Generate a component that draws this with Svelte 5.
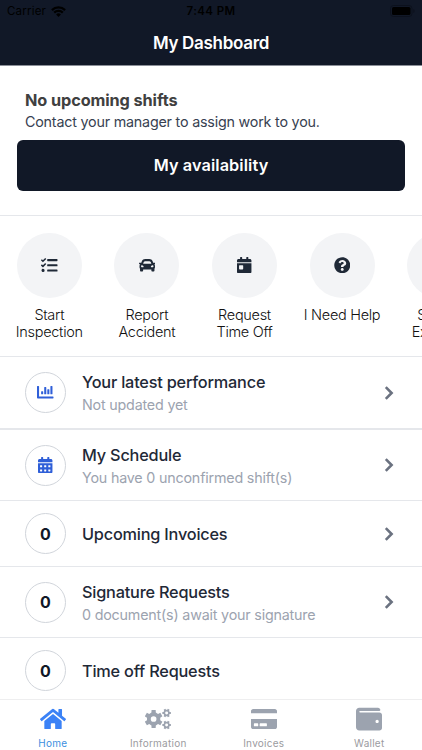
<script>

    // gear outline: alternating tooth tips and roots, with a round hole
    function gear(cx, cy, outer, inner, hole, turn) {
        let d = '';
        const teeth = [[-13, outer], [13, outer], [19, inner], [41, inner]];
        for (let i = 0; i < 6; i++) {
            for (const [a, r] of teeth) {
                const t = (i * 60 + a + turn - 90) * Math.PI / 180;
                d += (d ? 'L' : 'M') + (cx + r * Math.cos(t)).toFixed(1) + ' ' + (cy + r * Math.sin(t)).toFixed(1);
            }
        }
        return d + `zM${cx - hole} ${cy}a${hole} ${hole} 0 1 0 ${hole * 2} 0a${hole} ${hole} 0 1 0 ${-hole * 2} 0z`;
    }

    const calTop = 'M400 64h-48V16c0-8.8-7.2-16-16-16h-32c-8.8 0-16 7.2-16 16v48H160V16c0-8.8-7.2-16-16-16h-32c-8.8 0-16 7.2-16 16v48H48C21.5 64 0 85.5 0 112v48h448v-48c0-26.5-21.5-48-48-48z';
    const calBody = 'M0 464c0 26.5 21.5 48 48 48h352c26.5 0 48-21.5 48-48V192H0v272z';
    const day = 'c0-6.6 5.4-12 12-12h40c6.6 0 12 5.4 12 12v40c0 6.6-5.4 12-12 12h-40c-6.6 0-12-5.4-12-12z';

    const icons = {
        tasks: { w: 512, d: 'M139.61 35.5a12 12 0 0 0-17 0L58.93 98.81l-22.7-22.12a12 12 0 0 0-17 0L3.53 92.41a12 12 0 0 0 0 17l47.59 47.4a12.78 12.78 0 0 0 17.61 0l15.59-15.62L156.52 69a12.09 12.09 0 0 0 .09-17zm0 159.19a12 12 0 0 0-17 0l-63.68 63.72-22.7-22.1a12 12 0 0 0-17 0L3.53 252a12 12 0 0 0 0 17L51 316.5a12.77 12.77 0 0 0 17.6 0l15.7-15.69 72.2-72.22a12 12 0 0 0 .09-16.9zM64 368c-26.49 0-48.59 21.5-48.59 48S37.53 464 64 464a48 48 0 0 0 0-96zm432 16H208a16 16 0 0 0-16 16v32a16 16 0 0 0 16 16h288a16 16 0 0 0 16-16v-32a16 16 0 0 0-16-16zm0-320H208a16 16 0 0 0-16 16v32a16 16 0 0 0 16 16h288a16 16 0 0 0 16-16V80a16 16 0 0 0-16-16zm0 160H208a16 16 0 0 0-16 16v32a16 16 0 0 0 16 16h288a16 16 0 0 0 16-16v-32a16 16 0 0 0-16-16z' },
        car: { w: 512, d: 'M499.99 176h-59.87l-16.64-41.6C406.38 91.63 365.57 64 319.5 64h-127c-46.06 0-86.88 27.63-103.99 70.4L71.87 176H12.01C4.2 176-1.53 183.34.37 190.91l6 24C7.7 220.25 12.5 224 18.01 224h20.07C24.65 235.73 16 252.78 16 272v48c0 16.12 6.16 30.67 16 41.93V416c0 17.67 14.33 32 32 32h32c17.67 0 32-14.33 32-32v-32h256v32c0 17.67 14.33 32 32 32h32c17.67 0 32-14.33 32-32v-54.07c9.84-11.25 16-25.8 16-41.93v-48c0-19.22-8.65-36.27-22.07-48H494c5.51 0 10.31-3.75 11.64-9.09l6-24c1.89-7.57-3.84-14.91-11.65-14.91zm-352.06-17.83c7.29-18.22 24.94-30.17 44.57-30.17h127c19.63 0 37.28 11.95 44.57 30.17L384 208H128l19.93-49.83zM96 319.8c-19.2 0-32-12.76-32-31.9S76.8 256 96 256s48 28.71 48 47.85-28.8 15.95-48 15.95zm320 0c-19.2 0-48 3.19-48-15.95S396.8 256 416 256s32 12.76 32 31.9-12.8 31.9-32 31.9z' },
        calendarDay: { w: 448, d: calBody + 'M64 272c0-8.8 7.2-16 16-16h96c8.8 0 16 7.2 16 16v96c0 8.8-7.2 16-16 16H80c-8.8 0-16-7.2-16-16z' + calTop },
        calendar: { w: 448, d: calBody + [64, 192, 320].map(x => `M${x} 268${day}M${x} 396${day}`).join('') + calTop },
        question: { w: 512, d: 'M504 256c0 136.997-111.043 248-248 248S8 392.997 8 256C8 119.083 119.043 8 256 8s248 111.083 248 248zM262.655 90c-54.497 0-89.255 22.957-116.549 63.758-3.536 5.286-2.353 12.415 2.715 16.258l34.699 26.31c5.205 3.947 12.621 3.008 16.665-2.122 17.864-22.658 30.113-35.797 57.303-35.797 20.429 0 45.698 13.148 45.698 32.958 0 14.976-12.363 22.667-32.534 33.976C247.128 238.528 216 254.941 216 296v4c0 6.627 5.373 12 12 12h56c6.627 0 12-5.373 12-12v-1.333c0-28.462 83.186-29.647 83.186-106.667 0-58.002-60.165-102-116.531-102zM256 338c-25.365 0-46 20.635-46 46 0 25.364 20.635 46 46 46s46-20.636 46-46c0-25.365-20.635-46-46-46z' },
        chart: { w: 512, d: 'M332.8 320h38.4c6.4 0 12.8-6.4 12.8-12.8V172.8c0-6.4-6.4-12.8-12.8-12.8h-38.4c-6.4 0-12.8 6.4-12.8 12.8v134.4c0 6.4 6.4 12.8 12.8 12.8zm96 0h38.4c6.4 0 12.8-6.4 12.8-12.8V76.8c0-6.4-6.4-12.8-12.8-12.8h-38.4c-6.4 0-12.8 6.4-12.8 12.8v230.4c0 6.4 6.4 12.8 12.8 12.8zm-288 0h38.4c6.4 0 12.8-6.4 12.8-12.8v-70.4c0-6.4-6.4-12.8-12.8-12.8h-38.4c-6.4 0-12.8 6.4-12.8 12.8v70.4c0 6.4 6.4 12.8 12.8 12.8zm96 0h38.4c6.4 0 12.8-6.4 12.8-12.8V108.8c0-6.4-6.4-12.8-12.8-12.8h-38.4c-6.4 0-12.8 6.4-12.8 12.8v198.4c0 6.4 6.4 12.8 12.8 12.8zM496 384H64V80c0-8.84-7.16-16-16-16H16C7.16 64 0 71.16 0 80v336c0 17.67 14.33 32 32 32h464c8.84 0 16-7.16 16-16v-32c0-8.84-7.16-16-16-16z' },
        home: { w: 576, d: 'M280.37 148.26L96 300.11V464a16 16 0 0 0 16 16l112.06-.29a16 16 0 0 0 15.92-16V368a16 16 0 0 1 16-16h64a16 16 0 0 1 16 16v95.64a16 16 0 0 0 16 16.05L464 480a16 16 0 0 0 16-16V300L295.67 148.26a12.19 12.19 0 0 0-15.3 0zM571.6 251.47L488 182.56V44.05a12 12 0 0 0-12-12h-56a12 12 0 0 0-12 12v72.61L318.47 43a48 48 0 0 0-61 0L4.34 251.47a12 12 0 0 0-1.6 16.9l25.5 31A12 12 0 0 0 45.15 301l235.22-193.74a12.19 12.19 0 0 1 15.3 0L530.9 301a12 12 0 0 0 16.9-1.6l25.5-31a12 12 0 0 0-1.7-16.93z' },
        cogs: { w: 640, d: gear(212, 256, 226, 166, 70, 0) + gear(532, 108, 108, 80, 36, 30) + gear(532, 404, 108, 80, 36, 30) },
        card: { w: 576, d: 'M0 432c0 26.5 21.5 48 48 48h480c26.5 0 48-21.5 48-48V256H0v176zm192-68c0-6.6 5.4-12 12-12h136c6.6 0 12 5.4 12 12v40c0 6.6-5.4 12-12 12H204c-6.6 0-12-5.4-12-12v-40zm-128 0c0-6.6 5.4-12 12-12h72c6.6 0 12 5.4 12 12v40c0 6.6-5.4 12-12 12H76c-6.6 0-12-5.4-12-12v-40zM576 80v48H0V80c0-26.5 21.5-48 48-48h480c26.5 0 48 21.5 48 48z' },
        wallet: { w: 512, d: 'M461.2 128H80c-8.84 0-16-7.16-16-16s7.16-16 16-16h384c8.84 0 16-7.16 16-16 0-26.51-21.49-48-48-48H64C28.65 32 0 60.65 0 96v320c0 35.35 28.65 64 64 64h397.2c28.02 0 50.8-21.53 50.8-48V176c0-26.47-22.78-48-50.8-48zM416 336c-17.67 0-32-14.33-32-32s14.33-32 32-32 32 14.33 32 32-14.33 32-32 32z' }
    };

    const actions = [
        { icon: 'tasks', label: 'Start Inspection' },
        { icon: 'car', label: 'Report Accident' },
        { icon: 'calendarDay', label: 'Request Time Off' },
        { icon: 'question', label: 'I Need Help' },
        { icon: 'card', label: 'Submit Expense' }
    ];

    const rows = [
        { icon: 'chart', title: 'Your latest performance', sub: 'Not updated yet', kind: 'first', link: true },
        { icon: 'calendar', title: 'My Schedule', sub: 'You have 0 unconfirmed shift(s)', link: true },
        { count: 0, title: 'Upcoming Invoices', kind: 'short', link: true },
        { count: 0, title: 'Signature Requests', sub: '0 document(s) await your signature', link: true },
        { count: 0, title: 'Time off Requests', kind: 'short' }
    ];

    const tabs = [
        { icon: 'home', label: 'Home' },
        { icon: 'cogs', label: 'Information' },
        { icon: 'card', label: 'Invoices' },
        { icon: 'wallet', label: 'Wallet' }
    ];

    let active = 'Home';

</script>

<div class="screen">
    <header>
        <div class="status">
            <div class="carrier">
                Carrier
                <svg width="15" height="11" viewBox="0 0 15 11">
                    <path d="M.9 4.1a9.6 9.6 0 0 1 13.2 0M3.2 6.6a6.2 6.2 0 0 1 8.6 0" fill="none" stroke="currentColor" stroke-width="2.3"/>
                    <path d="M5.1 8.5a3.4 3.4 0 0 1 4.8 0L7.5 10.9z" fill="currentColor"/>
                </svg>
            </div>
            <div class="time">7:44 PM</div>
            <div class="power">
                <svg width="25" height="12" viewBox="0 0 25 12">
                    <rect x=".5" y=".5" width="21.5" height="11" rx="3" fill="none" stroke="#0c111d"/>
                    <rect x="2" y="2" width="18.5" height="8" rx="1.6"/>
                    <path d="M23.3 4v4a2.2 2.2 0 0 0 0-4z" fill="#0c111d"/>
                </svg>
            </div>
        </div>
        <h1>My Dashboard</h1>
    </header>

    <section class="shifts">
        <h2>No upcoming shifts</h2>
        <p>Contact your manager to assign work to you.</p>
        <button class="availability">My availability</button>
    </section>

    <section class="actions">
        {#each actions as action}
            <div class="action">
                <div class="bubble">
                    <svg height="16.5" viewBox="0 0 {icons[action.icon].w} 512"><path d={icons[action.icon].d}/></svg>
                </div>
                <span>{action.label}</span>
            </div>
        {/each}
    </section>

    <main>
        {#each rows as row}
            <div class="row {row.kind || ''}">
                <div class="ring">
                    {#if row.icon}
                        <svg height="16.5" viewBox="0 0 {icons[row.icon].w} 512"><path d={icons[row.icon].d}/></svg>
                    {:else}
                        {row.count}
                    {/if}
                </div>
                <div class="text">
                    <div class="title">{row.title}</div>
                    {#if row.sub}<div class="sub">{row.sub}</div>{/if}
                </div>
                {#if row.link}
                    <svg class="chevron" width="10" height="14" viewBox="0 0 10 14"><path d="M1.8 1.2L7.6 7L1.8 12.8"/></svg>
                {/if}
            </div>
        {/each}
    </main>

    <nav>
        {#each tabs as tab}
            <div class="tab" class:active={tab.label === active} on:click={() => active = tab.label}>
                <svg width="26" height="26" viewBox="0 0 {icons[tab.icon].w} 512"><path d={icons[tab.icon].d}/></svg>
                <span>{tab.label}</span>
            </div>
        {/each}
    </nav>
</div>

<style>

    :global(body) {
        background: #fff;
    }

    .screen {
        display: flex;
        flex-direction: column;
        height: 750px;
        overflow: hidden;
        font-family: Inter, "Liberation Sans", sans-serif;
        color: #1f2937;
    }

    svg {
        display: block;
        fill: currentColor;
        fill-rule: evenodd;
    }

    h1, h2, p {
        margin: 0;
    }

    header {
        flex: none;
        box-sizing: border-box;
        height: 66px;
        background: #111827;
        border-bottom: 1px solid #8b8f98;
    }

    .status {
        display: grid;
        grid-template-columns: 1fr auto 1fr;
        align-items: center;
        height: 22px;
        padding: 0 7px;
        font-size: 11.5px;
        color: #000;
    }

    .carrier {
        display: flex;
        align-items: center;
        gap: 5px;
        letter-spacing: 0.2px;
    }

    .time {
        font-weight: 600;
        letter-spacing: 0.4px;
    }

    .power {
        justify-self: end;
    }

    h1 {
        line-height: 42px;
        text-align: center;
        font-size: 17px;
        font-weight: 600;
        letter-spacing: -0.3px;
        color: #fff;
    }

    .shifts {
        flex: none;
        box-sizing: border-box;
        height: 150px;
        padding: 23px 17px 0;
        border-bottom: 1px solid #e5e7eb;
    }

    .shifts h2 {
        padding-left: 8px;
        font-size: 16.3px;
        line-height: 22px;
        font-weight: 700;
        letter-spacing: -0.1px;
        color: #404040;
    }

    .shifts p {
        padding-left: 8px;
        font-size: 14.3px;
        line-height: 21px;
        letter-spacing: -0.2px;
        color: #374151;
    }

    .availability {
        display: block;
        width: 100%;
        height: 51px;
        margin-top: 8px;
        padding: 0 0 1px;
        border: 0;
        border-radius: 6px;
        background: #111827;
        color: #fff;
        font-family: inherit;
        font-size: 16.3px;
        font-weight: 600;
        letter-spacing: 0.1px;
    }

    .actions {
        display: flex;
        flex: none;
        box-sizing: border-box;
        height: 141px;
        padding: 16.5px 0 0 0.5px;
        overflow: hidden;
        border-bottom: 1px solid #e5e7eb;
    }

    .action {
        display: flex;
        flex: none;
        flex-direction: column;
        align-items: center;
        width: 97.6px;
    }

    .bubble {
        display: flex;
        align-items: center;
        justify-content: center;
        width: 65px;
        height: 65px;
        border-radius: 50%;
        background: #f3f4f6;
    }

    .action span {
        width: 80px;
        margin-top: 8px;
        text-align: center;
        font-size: 14.5px;
        line-height: 17.5px;
        font-weight: 300;
        letter-spacing: -0.3px;
        color: #111;
    }

    main {
        flex: 1;
        min-height: 0;
        overflow: hidden;
    }

    .row {
        display: flex;
        align-items: center;
        box-sizing: border-box;
        height: 71px;
        padding: 0 28px 0 25px;
        border-bottom: 1px solid #e5e7eb;
    }

    .row.first {
        height: 73px;
        border-bottom-width: 2px;
    }

    .row.short {
        height: 66px;
    }

    .ring {
        display: flex;
        flex: none;
        align-items: center;
        justify-content: center;
        box-sizing: border-box;
        width: 41px;
        height: 41px;
        margin-right: 16px;
        border: 1px solid #d1d5db;
        border-radius: 50%;
        font-size: 16px;
        font-weight: 700;
        color: #111827;
    }

    .ring svg {
        color: #2f5fd8;
    }

    .text {
        flex: 1;
    }

    .title {
        font-size: 16.3px;
        line-height: 24px;
        font-weight: 500;
        letter-spacing: -0.2px;
    }

    .sub {
        font-size: 14.3px;
        line-height: 21px;
        letter-spacing: -0.19px;
        color: #9ca3af;
    }

    .chevron path {
        fill: none;
        stroke: #6b7280;
        stroke-width: 2.6;
    }

    nav {
        display: grid;
        grid-template-columns: repeat(4, 1fr);
        flex: none;
        box-sizing: border-box;
        height: 51px;
        border-top: 1px solid #eeeeef;
        background: #fff;
    }

    .tab {
        display: flex;
        flex-direction: column;
        align-items: center;
        padding-top: 6px;
        font-size: 10px;
        color: #9b9ba0;
    }

    .tab svg {
        color: #9ca3af;
    }

    .tab span {
        margin-top: 5px;
        line-height: 12px;
        letter-spacing: 0.25px;
    }

    .tab.active {
        color: #3b8fe0;
    }

    .tab.active svg {
        color: #3b82f6;
    }

</style>
